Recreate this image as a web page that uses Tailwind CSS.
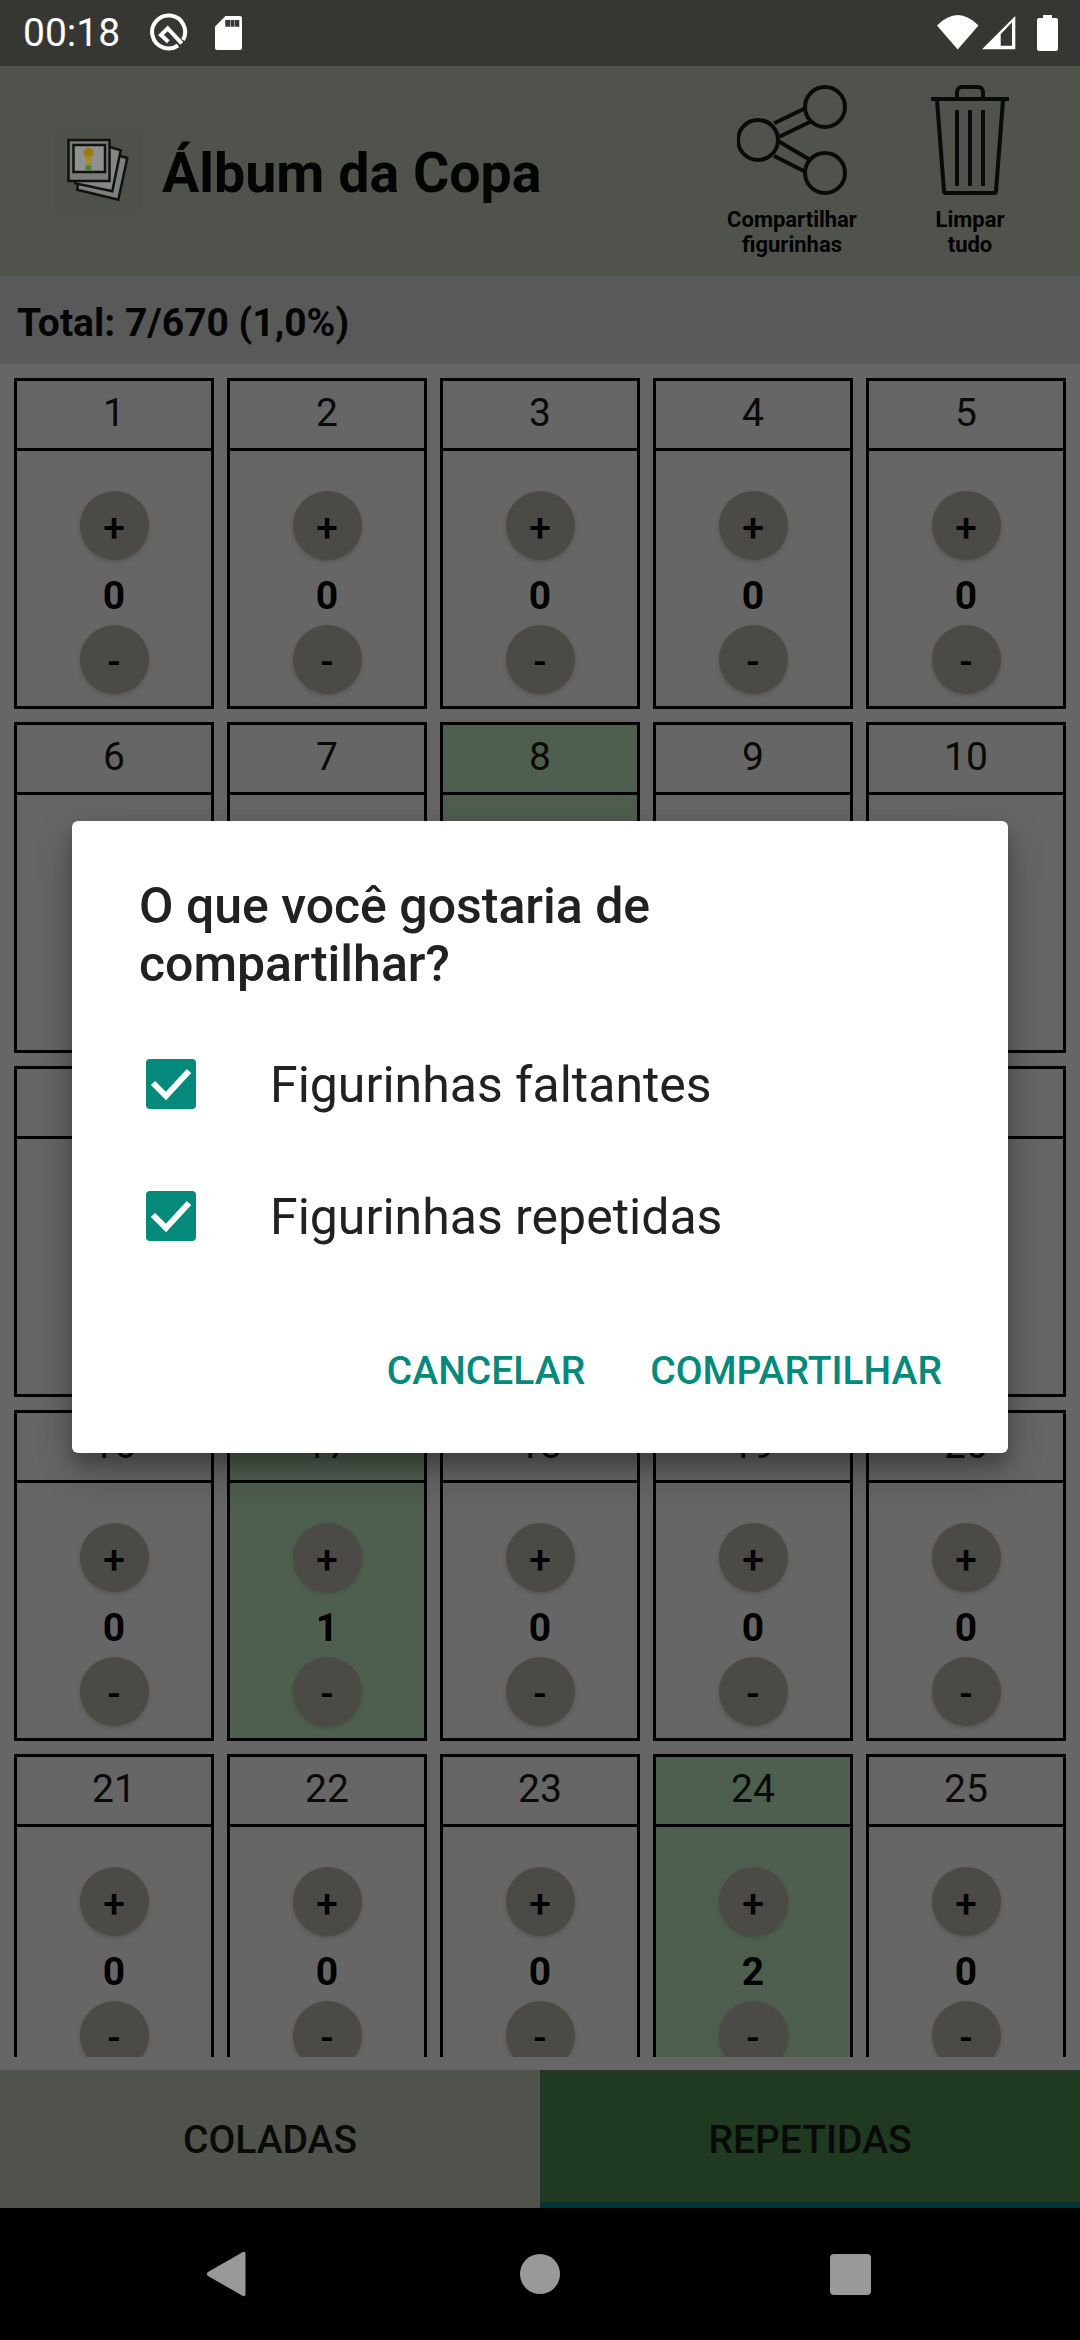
<!DOCTYPE html>
<html lang="pt">
<head>
<meta charset="utf-8">
<script src="https://cdn.jsdelivr.net/npm/@tailwindcss/browser@4"></script>
<title>Álbum da Copa</title>
</head>
<body class="m-0">
<div class="relative w-[1080px] h-[2340px] overflow-hidden flex flex-col bg-black text-black font-['Roboto',sans-serif]">
  <!-- status bar -->
  <div class="h-[66px] shrink-0 bg-[#363632] flex items-center text-white pl-[23px] pr-[22px]">
    <span class="text-[39px] leading-none w-[125px]">00:18</span>
    <svg class="w-[40px] h-[40px] mr-[27px]" viewBox="0 0 40 40" fill="none" stroke="#fff" stroke-width="4"><path d="M30 32.500A16.500 16.500 0 1 1 35 27"/><path d="M20.300 28.700 13 22l6.700-6.700 14 15"/></svg>
    <svg class="w-[27px] h-[34px]" viewBox="0 0 27 34"><path d="M10.500 0H25a2 2 0 0 1 2 2v30a2 2 0 0 1-2 2H2a2 2 0 0 1-2-2V10.500z" fill="#fff"/><path d="M10.300 4H15v6.700h-4.700zM15.500 4h4v6.700h-4zM20 4h4.300v6.700H20z" fill="#363632"/></svg>
    <div class="flex-1"></div>
    <svg class="w-[42px] h-[36px] mr-[3px]" viewBox="0 0 42 36"><path d="M20.700 34.500 0 10.500Q20.700-10.500 41.500 10.500z" fill="#fff"/></svg>
    <svg class="w-[35px] h-[35px] mr-[20px]" viewBox="0 0 35 35"><path d="M33.300 0v33.300H0z M30 6.300 18.700 18.300v11.400H30z" fill="#fff" fill-rule="evenodd"/></svg>
    <svg class="w-[21px] h-[36px]" viewBox="0 0 21 36"><path d="M6 0h9v3h4a2 2 0 0 1 2 2v29a2 2 0 0 1-2 2H2a2 2 0 0 1-2-2V5a2 2 0 0 1 2-2h4z" fill="#fff"/></svg>
  </div>

  <!-- app bar -->
  <div class="h-[210px] shrink-0 bg-[#50524c] flex items-center relative">
    <div class="ml-[55px] w-[88px] h-[87px] rounded-[8px] bg-[#4e504a] flex items-center justify-center">
      <svg class="w-[70px] h-[70px]" viewBox="0 0 70 70" fill="none">
        <path d="M56 20 63.300 22 54.300 63.700 13.300 53.700 14 48" fill="#7f7f7f" stroke="#111" stroke-width="2.500"/>
        <path d="M46 11 56.700 14.300 48.300 55.300 10 47" fill="#858585" stroke="#111" stroke-width="2.500"/>
        <rect x="4.500" y="4" width="41" height="41" fill="#7a7a78" stroke="#111" stroke-width="2.500"/>
        <rect x="9.500" y="9" width="31.500" height="27" fill="#8e9190" stroke="#111" stroke-width="2.500"/>
        <ellipse cx="24.500" cy="16.500" rx="5" ry="5" fill="#a07a10"/>
        <path d="M21.500 20h6l-1 10h-4z" fill="#a58a20"/>
        <rect x="21.500" y="29.500" width="6" height="5" fill="#4c8040"/>
      </svg>
    </div>
    <div class="ml-[19px] text-[55.500px] leading-none font-bold text-[#040404] mt-[6px]">Álbum da Copa</div>
    <div class="flex-1"></div>
    <div class="absolute left-[728px] top-[19px] w-[128px] flex flex-col items-center">
      <svg class="w-[110px] h-[110px] block" viewBox="0 0 110 110" fill="none" stroke="#0a0a0a" stroke-width="4">
        <circle cx="88" cy="22" r="20"/><circle cx="21" cy="55" r="20"/><circle cx="88" cy="88" r="20"/>
        <path d="M37.200 38.300 68.100 23.300M42.300 51.700 73.300 36.700M42.300 56.700 73.300 75M37.200 71 68.100 86.700"/>
      </svg>
      <div class="mt-[13px] text-center text-[22px] leading-[24.500px] font-bold whitespace-nowrap">Compartilhar<br>figurinhas</div>
    </div>
    <div class="absolute left-[906px] top-[19px] w-[128px] flex flex-col items-center">
      <svg class="w-[80px] h-[110px] block" viewBox="0 0 80 110" fill="none" stroke="#0a0a0a" stroke-width="4">
        <path d="M1 14h78" /><path d="M27 13V7a5 5 0 0 1 5-5h16a5 5 0 0 1 5 5v6"/>
        <path d="M7 15l7 91a2 2 0 0 0 2 2h48a2 2 0 0 0 2-2l7-91"/>
        <path d="M27 25v76M40 25v76M53 25v76"/>
      </svg>
      <div class="mt-[13px] text-center text-[22px] leading-[24.500px] font-bold">Limpar<br>tudo</div>
    </div>
  </div>

  <!-- total -->
  <div class="h-[88px] shrink-0 bg-[#595959] flex items-center pl-[17px] pt-[6px] text-[39px] font-bold text-[#050505]">Total: 7/670 (1,0%)</div>

  <!-- list -->
  <div class="h-[1706px] shrink-0 bg-[#666666] pb-[13px]">
    <div id="grid" class="h-full overflow-hidden grid grid-cols-5 gap-[13px] px-[14px] pt-[14px] content-start"></div>
  </div>

  <!-- tabs -->
  <div class="h-[138px] shrink-0 flex text-[39px] font-medium text-[#0a0a0a]">
    <div class="w-1/2 bg-[#50524c] flex items-center justify-center pt-[2px]">COLADAS</div>
    <div class="w-1/2 bg-[#1f3a20] flex items-center justify-center border-b-[6px] border-[#00363a] pt-[8px]">REPETIDAS</div>
  </div>

  <!-- nav -->
  <div class="flex-1 bg-black relative flex items-center">
    <svg class="absolute left-[205px] top-[42px] w-[42px] h-[48px]" viewBox="0 0 42 48"><path d="M37 2.500c2-1.500 3.500-.5 3.500 1.500v40c0 2-1.500 3-3.500 1.500L3 26c-1.500-1-1.500-3 0-4z" fill="#999"/></svg>
    <div class="absolute left-[520px] top-[46px] w-[40px] h-[40px] rounded-full bg-[#999]"></div>
    <div class="absolute left-[830px] top-[46px] w-[41px] h-[41px] rounded-[4px] bg-[#999]"></div>
  </div>

  <!-- dialog -->
  <div class="absolute left-[72px] top-[821px] w-[936px] h-[632px] bg-white rounded-[6px] shadow-[0_24px_38px_rgba(0,0,0,0.14),0_9px_46px_rgba(0,0,0,0.12),0_11px_15px_rgba(0,0,0,0.2)] flex flex-col">
    <div class="pt-[56px] pl-[67px] pr-[60px] text-[50px] leading-[58px] font-medium text-[#212121]">O que você gostaria de compartilhar?</div>
    <div class="mt-[25px] pl-[74px]">
      <div class="h-[132px] flex items-center text-[50px] text-[#212121]">
        <span class="w-[50px] h-[50px] rounded-[4px] bg-[#04897a] flex items-center justify-center"><svg class="w-[50px] h-[50px]" viewBox="0 0 50 50" fill="none"><path d="M7 24l13 13L43 12" stroke="#fff" stroke-width="6"/></svg></span>
        <span class="ml-[74px] pt-[2px]">Figurinhas faltantes</span>
      </div>
      <div class="h-[132px] flex items-center text-[50px] text-[#212121]">
        <span class="w-[50px] h-[50px] rounded-[4px] bg-[#04897a] flex items-center justify-center"><svg class="w-[50px] h-[50px]" viewBox="0 0 50 50" fill="none"><path d="M7 24l13 13L43 12" stroke="#fff" stroke-width="6"/></svg></span>
        <span class="ml-[74px] pt-[2px]">Figurinhas repetidas</span>
      </div>
    </div>
    <div class="mt-auto mb-[57px] pr-[66px] flex justify-end gap-[65px] text-[39px] leading-[50px] font-medium text-[#04897a]">
      <span>CANCELAR</span><span>COMPARTILHAR</span>
    </div>
  </div>
</div>
<script>
const green = {8:1, 17:1, 24:2};
document.getElementById('grid').innerHTML = Array.from({length:25},(_,i)=>{
  const n=i+1, g=green[n]!==undefined;
  return `<div class="h-[331px] border-[3px] border-black flex flex-col ${g?'bg-[#4f5f4f]':'bg-[#666666]'}">
    <div class="h-[70px] shrink-0 border-b-[3px] border-black flex items-center justify-center text-[39px] text-[#0a0a0a] pb-[3px]">${n}</div>
    <div class="flex flex-col items-center pt-[40px]">
      <div class="w-[69px] h-[69px] rounded-full bg-[#4b4a46] shadow-[0_2px_4px_rgba(0,0,0,0.18)] flex items-center justify-center text-[39px] font-medium pt-[6px]">+</div>
      <div class="h-[65px] flex items-center justify-center text-[39px] font-bold pt-[8px]">${g?green[n]:0}</div>
      <div class="w-[69px] h-[69px] rounded-full bg-[#4b4a46] shadow-[0_2px_4px_rgba(0,0,0,0.18)] flex items-center justify-center text-[39px] font-medium pt-[6px]">-</div>
    </div>
  </div>`}).join('');
</script>
</body>
</html>
